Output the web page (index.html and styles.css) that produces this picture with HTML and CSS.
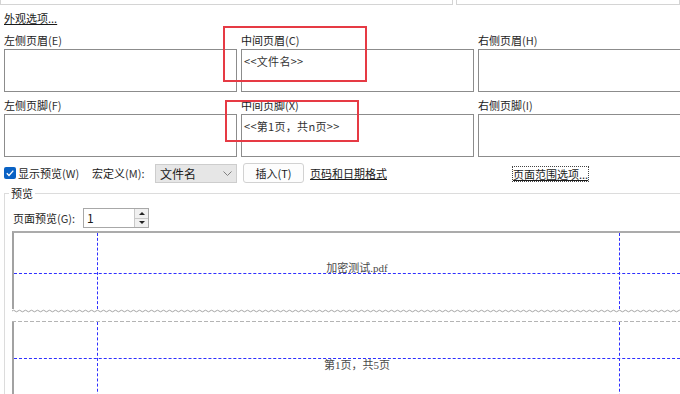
FILE: index.html
```html
<!DOCTYPE html>
<html lang="zh-CN">
<head>
  <meta charset="UTF-8" />
  <title>页眉和页脚</title>
  <link rel="stylesheet" href="styles.css">
</head>
<body>

  <div class="top-fields">
    <div class="field-stub wide"></div>
    <div class="field-stub"></div>
  </div>

  <div class="appearance"><a href="#">外观选项...</a></div>

  <div class="slots">
    <div class="slot">
      <label>左侧页眉<span class="key">(E)</span></label>
      <div class="textbox"></div>
    </div>
    <div class="slot">
      <label>中间页眉<span class="key">(C)</span></label>
      <div class="textbox">&lt;&lt;文件名&gt;&gt;</div>
    </div>
    <div class="slot">
      <label>右侧页眉<span class="key">(H)</span></label>
      <div class="textbox"></div>
    </div>
    <div class="slot">
      <label>左侧页脚<span class="key">(F)</span></label>
      <div class="textbox"></div>
    </div>
    <div class="slot">
      <label>中间页脚<span class="key">(X)</span></label>
      <div class="textbox">&lt;&lt;第1页，共n页&gt;&gt;</div>
    </div>
    <div class="slot">
      <label>右侧页脚<span class="key">(I)</span></label>
      <div class="textbox"></div>
    </div>
  </div>

  <div class="controls">
    <div class="ctrl-group">
      <svg class="check" width="12" height="12" viewBox="0 0 12 12">
        <rect width="12" height="12" rx="2" fill="#0a62c4"/>
        <polyline points="2.8,6.2 5,8.4 9.3,3.6" fill="none" stroke="#fff" stroke-width="1.4"/>
      </svg>
      <span class="check-label">显示预览<span class="key">(W)</span></span>
      <span class="macro-label">宏定义<span class="key">(M):</span></span>
      <div class="select">
        <span>文件名</span>
        <svg width="9" height="5" viewBox="0 0 9 5">
          <polyline points="0.5,0.5 4.5,4.5 8.5,0.5" fill="none" stroke="#808080"/>
        </svg>
      </div>
    </div>
    <div class="ctrl-group">
      <button class="btn">插入(T)</button>
      <a class="link-fmt" href="#">页码和日期格式</a>
    </div>
    <div class="ctrl-group">
      <a class="link-range" href="#">页面范围选项...</a>
    </div>
  </div>

  <fieldset class="preview-group">
    <legend>预览</legend>

    <div class="page-pick">
      <span>页面预览<span class="key">(G):</span></span>
      <div class="spin">
        <span class="spin-value">1</span>
        <div class="spin-btns">
          <div class="spin-btn"><span class="tri up"></span></div>
          <div class="spin-btn"><span class="tri down"></span></div>
        </div>
      </div>
    </div>

    <div class="sheet">
      <div class="page first">
        <div class="guide v left"></div>
        <div class="guide v right"></div>
        <div class="guide h" style="top: 40px"></div>
        <div class="hdr-zone"><span class="page-text">加密测试.pdf</span></div>
      </div>
      <svg class="tear" width="688" height="13">
        <defs>
          <pattern id="wave" width="6" height="4" patternUnits="userSpaceOnUse">
            <path d="M0 2 Q1.5 0.4 3 2 T6 2" fill="none" stroke="#9a9a9a" stroke-width="0.9"/>
          </pattern>
        </defs>
        <rect x="0" y="0" width="688" height="4" fill="url(#wave)"/>
        <line x1="0" y1="12.5" x2="688" y2="12.5" stroke="#b4b4b4" stroke-dasharray="4 2"/>
      </svg>
      <div class="page second">
        <div class="guide v left"></div>
        <div class="guide v right"></div>
        <div class="guide h" style="top: 36px"></div>
        <div class="ftr-zone"><span class="page-text">第1页，共5页</span></div>
      </div>
    </div>
  </fieldset>

  <div class="mark mark-header"></div>
  <div class="mark mark-footer"></div>

</body>
</html>
```

FILE: styles.css
```css
:root {
  --text: #1b1b1b;
  --box-border: #8c8c8c;
  --guide: #2f2fff;
  --mark: #e63a44;
}

* {
  box-sizing: border-box;
}

body {
  margin: 0;
  width: 680px;
  height: 394px;
  overflow: hidden;
  position: relative;
  background: #fff;
  color: var(--text);
  font-family: "Noto Sans CJK SC", sans-serif;
  font-size: 11px;
  line-height: 16px;
}

a {
  color: inherit;
  text-decoration: underline;
}

.key {
  color: #333;
}

/* cut-off fields above */
.top-fields {
  display: flex;
  gap: 3px;
  height: 5px;
}

.field-stub {
  border: 1px solid #d4d4d4;
  border-top: none;
}

.field-stub.wide {
  width: 453px;
}

.field-stub:last-child {
  flex: 1;
}

.appearance {
  margin: 5px 0 0 4px;
  height: 16px;
}

/* header / footer inputs */
.slots {
  display: grid;
  grid-template-columns: repeat(3, 233px);
  column-gap: 4px;
  row-gap: 5px;
  margin: 6px 0 0 4px;
}

.slot label {
  display: block;
  height: 16px;
  margin-bottom: 1px;
}

.textbox {
  height: 43px;
  border: 1px solid var(--box-border);
  padding: 3px 2px;
  color: #333;
  letter-spacing: 0.3px;
}

/* options row */
.controls {
  display: grid;
  grid-template-columns: repeat(3, 233px);
  column-gap: 4px;
  margin: 5px 0 0 4px;
  height: 20px;
}

.ctrl-group {
  display: flex;
  align-items: center;
}

.check {
  flex: none;
}

.check-label {
  margin-left: 2px;
}

.macro-label {
  margin-left: 13px;
}

.select {
  margin-left: auto;
  margin-top: 2px;
  width: 82px;
  height: 19px;
  background: #e6e6e6;
  border: 1px solid #cdcdcd;
  display: flex;
  align-items: center;
  justify-content: space-between;
  padding: 0 4px 0 4px;
  font-size: 12px;
}

.btn {
  margin-left: 2px;
  width: 61px;
  height: 20px;
  padding: 0;
  background: #fdfdfd;
  border: 1px solid #d2d2d2;
  border-radius: 3px;
  font: inherit;
  color: var(--text);
}

.link-fmt {
  margin-left: 6px;
}

.link-range {
  margin-left: 35px;
  margin-top: 2px;
  outline: 1px dotted #444;
  line-height: 14px;
}

/* preview group */
.preview-group {
  margin: 3px 0 0 4px;
  padding: 7px 0 0 7px;
  border: 1px solid #dcdcdc;
  border-right: none;
  border-bottom: none;
  min-width: 0;
}

.preview-group legend {
  padding: 0 2px;
  margin-left: -3px;
  line-height: 16px;
}

.page-pick {
  display: flex;
  align-items: center;
  height: 20px;
  padding-left: 1px;
}

.spin {
  margin-left: 8px;
  width: 66px;
  height: 20px;
  border: 1px solid #a8a8a8;
  display: flex;
}

.spin-value {
  flex: 1;
  padding-left: 3px;
  line-height: 18px;
  font-size: 12px;
}

.spin-btns {
  width: 14px;
  display: flex;
  flex-direction: column;
  border-left: 1px solid #c8c8c8;
}

.spin-btn {
  flex: 1;
  background: #f0f0f0;
  display: flex;
  align-items: center;
  justify-content: center;
}

.spin-btn + .spin-btn {
  border-top: 1px solid #c8c8c8;
}

.tri {
  width: 0;
  height: 0;
  border-left: 3px solid transparent;
  border-right: 3px solid transparent;
}

.tri.up {
  border-bottom: 3px solid #222;
}

.tri.down {
  border-top: 3px solid #222;
}

/* page canvas */
.sheet {
  margin-top: 3px;
  width: 688px;
}

.page {
  position: relative;
  border-left: 2px solid #a2a2a2;
}

.page.first {
  height: 78px;
  border-top: 2px solid #ababab;
}

.page.second {
  height: 80px;
}

.tear {
  display: block;
  overflow: visible;
}

.guide {
  position: absolute;
}

.guide.v {
  top: 0;
  bottom: 0;
  width: 0;
  border-left: 1px dashed var(--guide);
}

.guide.left {
  left: 83px;
}

.guide.right {
  left: 605px;
}

.guide.h {
  left: 0;
  right: 0;
  height: 0;
  border-top: 1px dashed var(--guide);
}

.page-text {
  font-family: "Liberation Serif", "Noto Sans CJK SC", serif;
  font-size: 11px;
  line-height: 11px;
  color: #4a4a4a;
}

.hdr-zone {
  height: 41px;
  display: flex;
  align-items: flex-end;
  justify-content: center;
}

.ftr-zone {
  padding-top: 38px;
  display: flex;
  justify-content: center;
}

/* red annotation frames */
.mark {
  position: absolute;
  border: 2px solid var(--mark);
}

.mark-header {
  left: 223px;
  top: 26px;
  width: 144px;
  height: 56px;
}

.mark-footer {
  left: 225px;
  top: 100px;
  width: 134px;
  height: 42px;
}
```
